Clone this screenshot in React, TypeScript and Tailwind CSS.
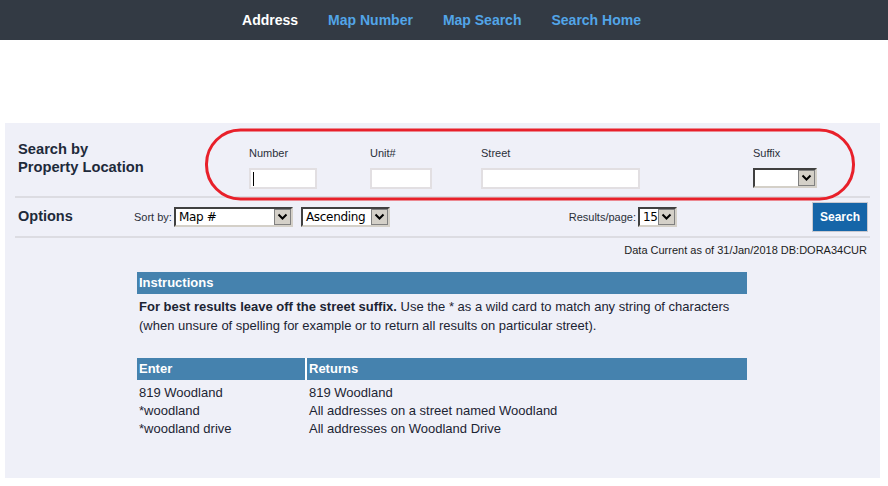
import React from "react";

const navItems = [
  { label: "Address", active: true },
  { label: "Map Number", active: false },
  { label: "Map Search", active: false },
  { label: "Search Home", active: false },
];

const examples = [
  { enter: "819 Woodland", returns: "819 Woodland" },
  { enter: "*woodland", returns: "All addresses on a street named Woodland" },
  { enter: "*woodland drive", returns: "All addresses on Woodland Drive" },
];

function Chevron() {
  return (
    <svg width="11" height="8" viewBox="0 0 11 8">
      <polyline points="1.5,1.5 5.5,5.5 9.5,1.5" fill="none" stroke="#000" strokeWidth="2" />
    </svg>
  );
}

// old windows style select box
function FakeSelect({ value, width }: { value: string; width: string }) {
  return (
    <div
      className={`${width} h-[20px] flex bg-white border-t-2 border-l-2 border-[#404040] border-r-2 border-b-2 border-r-[#d4d0c8] border-b-[#d4d0c8]`}
    >
      <div className="flex-1 pl-[3px] text-[12px] leading-[16px] text-black font-['DejaVu_Sans',Verdana,sans-serif] tracking-[-0.3px] overflow-hidden whitespace-nowrap">
        {value}
      </div>
      <div className="w-[17px] h-full bg-[#d4d0c8] border border-[#808080] flex items-center justify-center">
        <Chevron />
      </div>
    </div>
  );
}

function TextBox({ width, cursor = false }: { width: string; cursor?: boolean }) {
  return (
    <div className={`${width} h-[21px] bg-white border-2 border-[#e2dfe2] flex items-center`}>
      {cursor && <div className="ml-[2px] w-px h-[14px] bg-black" />}
    </div>
  );
}

export default function App() {
  return (
    <div className="w-[888px] h-[486px] bg-white font-['Liberation_Sans',Arial,sans-serif] text-[#1c2735] relative overflow-hidden">
      <nav className="h-[40px] bg-[#333a44] flex items-center justify-center gap-[30px] pr-[5px] text-[14px] font-bold">
        {navItems.map((item) => (
          <span key={item.label} className={item.active ? "text-white" : "text-[#52a5e8]"}>
            {item.label}
          </span>
        ))}
      </nav>

      <div className="mt-[83px] ml-[5px] w-[875px] h-[355px] bg-[#eff0f8] px-[10px]">
        {/* search row */}
        <div className="h-[75px] flex border-b-2 border-[#dcdce2]">
          <div className="w-[234px] pl-[3px] self-center text-[14.7px] font-bold leading-[18px] text-[#1e2a3a] mt-[-4px]">
            Search by
            <br />
            Property Location
          </div>
          <div className="flex mt-[24px] text-[11px] leading-[13px] text-[#2a2f38]">
            <div className="w-[120px]">
              <div className="mb-[8px]">Number</div>
              <TextBox width="w-[68px]" cursor />
            </div>
            <div className="w-[111px] pl-px">
              <div className="mb-[8px]">Unit#</div>
              <TextBox width="w-[62px]" />
            </div>
            <div className="w-[273px] pl-px">
              <div className="mb-[8px]">Street</div>
              <TextBox width="w-[159px]" />
            </div>
            <div>
              <div className="mb-[8px]">Suffix</div>
              <div className="h-[21px]">
                <FakeSelect value="" width="w-[64px]" />
              </div>
            </div>
          </div>
        </div>

        {/* options row */}
        <div className="h-[40px] flex items-center border-b-2 border-[#dcdce2]">
          <div className="w-[119px] pl-[3px] text-[14.5px] font-bold text-[#1e2a3a]">Options</div>
          <span className="text-[11px] text-[#2a2f38] mr-[2px]">Sort by:</span>
          <FakeSelect value="Map #" width="w-[119px]" />
          <div className="ml-[8px]">
            <FakeSelect value="Ascending" width="w-[89px]" />
          </div>
          <div className="flex-1" />
          <span className="text-[11px] text-[#2a2f38] mr-[2px]">Results/page:</span>
          <FakeSelect value="15" width="w-[39px]" />
          <button className="ml-[135px] mr-[2px] w-[56px] h-[30px] bg-[#1565a8] border border-[#c9c9d0] text-white text-[12px] font-bold">
            Search
          </button>
        </div>

        <div className="mt-[6px] pr-[3px] text-right text-[11px] leading-[13px] text-[#1c1c1c]">
          Data Current as of 31/Jan/2018 DB:DORA34CUR
        </div>

        <div className="ml-[122px] w-[610px] mt-[15px]">
          <div className="h-[22px] bg-[#4582ae] text-white text-[13px] font-bold leading-[22px] pl-[2px]">
            Instructions
          </div>
          <p className="mt-[3px] text-[13px] leading-[19px] pl-[2px] text-[#1c2433]">
            <b>For best results leave off the street suffix.</b> Use the * as a wild card to match any
            string of characters (when unsure of spelling for example or to return all results on
            particular street).
          </p>

          <div className="mt-[23px] flex h-[22px] text-white text-[13px] font-bold leading-[22px]">
            <div className="w-[168px] bg-[#4582ae] pl-[2px]">Enter</div>
            <div className="w-[2px] bg-white" />
            <div className="flex-1 bg-[#4582ae] pl-[2px]">Returns</div>
          </div>
          <div className="mt-[4px] text-[13px] leading-[18px] text-[#1c2433]">
            {examples.map((row) => (
              <div key={row.enter} className="flex">
                <div className="w-[170px] pl-[2px]">{row.enter}</div>
                <div className="pl-[2px]">{row.returns}</div>
              </div>
            ))}
          </div>
        </div>
      </div>

      {/* red annotation around the location fields */}
      <svg className="absolute left-0 top-0 pointer-events-none" width="888" height="486">
        <rect x="206.5" y="130" width="647" height="69" rx="34" fill="none" stroke="#e8202a" strokeWidth="3" />
      </svg>
    </div>
  );
}
